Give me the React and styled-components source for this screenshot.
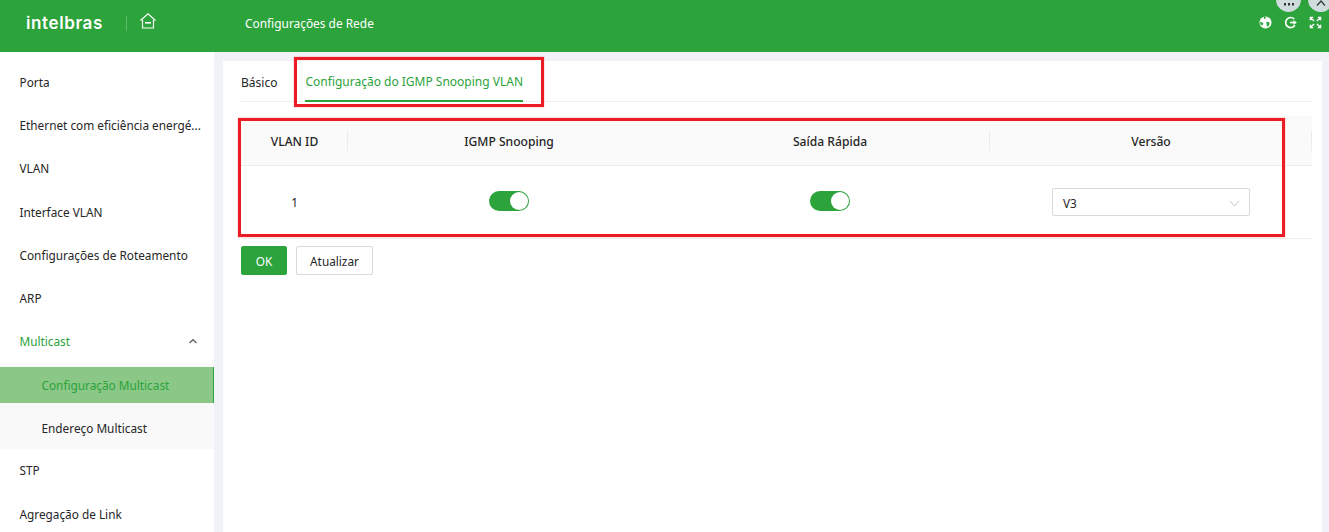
import React from 'react';
import styled, { createGlobalStyle } from 'styled-components';

const Global = createGlobalStyle`
  html, body { margin: 0; padding: 0; height: 100%; background: #f0f2f7; overflow: hidden; }
  #root { height: 100%; }
  * { box-sizing: border-box; }
`;
const Page = styled.div`
  position: relative; width: 1329px; height: 532px; overflow: hidden;
  display: flex; flex-direction: column;
  font-family: "Noto Sans", "Open Sans", sans-serif; font-size: 11.8px; color: #262626;
`;
const Header = styled.header`
  height: 52px; flex: none; background: #2ca33b; color: #fff; display: flex; align-items: center;
`;
const Logo = styled.div`
  margin-left: 26px; width: 76px; font-family: Inter, sans-serif; font-weight: 600; font-size: 17px; letter-spacing: 0.6px; line-height: 18px; margin-top: -6px; white-space: nowrap;
`;
const HeaderDivider = styled.div`
  width: 1px; height: 15px; background: #5dba68; margin: -6px 13px 0 24px;
`;
const HomeBtn = styled.svg`
  width: 16px; height: 16px; margin-top: -10px;
`;
const HeaderTitle = styled.div`
  margin-left: 89px; font-size: 11.9px; margin-top: -7px;
`;
const HeaderIcons = styled.div`
  margin-left: auto; margin-right: 7px; margin-top: -8px; display: flex; gap: 12px; align-items: center;
`;
const HeadIcon = styled.svg`
  width: 13px; height: 13px; display: block;
`;
const FloatBtn = styled.div`
  position: absolute; top: -13px; left: ${p => p.$x}px; width: 25px; height: 25px; border-radius: 50%;
  background: #cfdcdc; display: flex; align-items: flex-end; justify-content: center; padding-bottom: 6px;
`;
const Body = styled.div`
  flex: 1; display: flex; min-height: 0;
`;
const Sidebar = styled.nav`
  width: 214px; flex: none; background: #fff; padding-top: 9px; overflow: hidden;
`;
const MenuItem = styled.div`
  height: 43.2px; padding: 0 16px 1px 19.500px; display: flex; align-items: center; justify-content: space-between;
  white-space: nowrap; color: ${p => (p.$active ? '#2ca33b' : '#262626')};
`;
const SubMenu = styled.div`
  background: #f9f9f9; padding: 4px 0 3px; display: flex; flex-direction: column; gap: 7px;
`;
const SubItem = styled.div`
  height: 36px; padding-left: 41.500px; display: flex; align-items: center;
  ${p => p.$active ? 'background: #8bc887; color: #2ca33b; border-right: 1px solid #2ca33b;' : ''}
`;
const Main = styled.main`
  margin: 9px 7px 0 9px; flex: 1; background: #fff; padding: 0 10px 0 18px;
`;
const Tabs = styled.div`
  height: 41px; border-bottom: 1px solid #eeeeee; display: flex; gap: 28px; align-items: stretch;
`;
const Tab = styled.div`
  display: flex; align-items: center; padding-top: 1px; height: 41px; font-size: 12px;
  ${p => p.$active ? 'color: #2ca33b; border-bottom: 2px solid #2ca33b;' : ''}
`;
const Table = styled.div`
  margin-top: 14px; display: grid; grid-template-columns: 107px 322px 320px 322px;
`;
const HeadCell = styled.div`
  height: 50px; background: #fafafa; border-bottom: 1px solid #eeeeee; display: flex; align-items: center; justify-content: center;
  font-weight: 500; position: relative; font-size: 12.1px; padding-top: 2px;
  &::after { content: ''; position: absolute; right: 0; top: 15px; height: 20px; width: 1px; background: ${p => (p.$plain ? 'transparent' : '#ececec')}; }
`;
const Cell = styled.div`
  height: 73px; border-bottom: 1px solid #eeeeee; display: flex; align-items: center; justify-content: center; padding-bottom: ${p => (p.$text ? '0' : '2px')};
`;
const Switch = styled.div`
  width: 40px; height: 20px; border-radius: 10px; background: #2ca33b; display: flex; justify-content: flex-end; align-items: center; padding-right: 1px;
  &::after { content: ''; width: 18px; height: 18px; border-radius: 50%; background: #fff; }
`;
const Select = styled.div`
  width: 198px; height: 28px; border: 1px solid #d9d9d9; border-radius: 2px; display: flex; align-items: center; justify-content: space-between;
  padding: 2px 9px 0 10px; background: #fff; margin-top: 2px;
`;
const Actions = styled.div`
  margin-top: 7px; display: flex; gap: 9px;
`;
const Button = styled.button`
  height: 29px; padding: 0; width: ${p => p.$w}px; font: inherit; border-radius: 2px; cursor: pointer;
  border: 1px solid ${p => (p.$primary ? '#2ca33b' : '#d9d9d9')};
  background: ${p => (p.$primary ? '#2ca33b' : '#fff')}; color: ${p => (p.$primary ? '#fff' : '#262626')};
`;
const RedBox = styled.div`
  position: absolute; border: 3px solid #ec1c24; pointer-events: none; box-shadow: 0 0 1px rgba(236, 28, 36, 0.7);
  left: ${p => p.$x}px; top: ${p => p.$y}px; width: ${p => p.$w}px; height: ${p => p.$h}px;
`;

export default function App() {
  return (
    <Page>
      <Global />
      <Header>
        <Logo>intelbras</Logo>
        <HeaderDivider />
        <HomeBtn viewBox="0 0 16 16" fill="none" stroke="#fff" strokeWidth="1.2">
          <path d="M.5 7.500 8 .8l7.500 6.700" />
          <path d="M2.500 7v8h11V7" />
          <path d="M5 9.800h6" strokeWidth="1.600" />
        </HomeBtn>
        <HeaderTitle>Configurações de Rede</HeaderTitle>
        <HeaderIcons>
          <HeadIcon viewBox="0 0 14 14">
            <circle cx="7" cy="7" r="6.500" fill="#fff" />
            <path d="M7.800 6.200 11 6.800l.4 1.700-1.900 3.300-1-1.300zM1 6.300l2.200.3L4.600 8l-.8 2.300L1.800 9.500z" fill="#2ca33b" />
            <path d="M5.600 .8 5 2.400l1.800 1 .6-2.700z" fill="#2ca33b" />
          </HeadIcon>
          <HeadIcon viewBox="0 0 14 14" fill="none" stroke="#fff" strokeWidth="1.800">
            <path d="M11 3.200A5.400 5.400 0 1 0 11.700 10" />
            <path d="M6.500 7H12" />
            <path d="M10.500 4.800v4.400L13.500 7z" fill="#fff" strokeWidth="0.5" />
          </HeadIcon>
          <HeadIcon viewBox="0 0 14 14" fill="none" stroke="#fff" strokeWidth="1.500">
            <path d="M1.500 4.500v-3h3M1.500 1.500 5.500 5.500M12.500 4.500v-3h-3M12.500 1.500 8.500 5.500M1.500 9.500v3h3M1.500 12.500l4-4M12.500 9.500v3h-3M12.500 12.500l-4-4" />
          </HeadIcon>
        </HeaderIcons>
      </Header>
      <FloatBtn $x={1276}>
        <svg width="10" height="3" viewBox="0 0 10 3" fill="#333"><rect x="0" width="2" height="2.500" /><rect x="4" width="2" height="2.500" /><rect x="8" width="2" height="2.500" /></svg>
      </FloatBtn>
      <FloatBtn $x={1308}>
        <svg width="10" height="6" viewBox="0 0 10 6" fill="none" stroke="#333" strokeWidth="1.200"><path d="M1 5.500 5 1l4 4.500" /></svg>
      </FloatBtn>
      <Body>
        <Sidebar>
          <MenuItem>Porta</MenuItem>
          <MenuItem>Ethernet com eficiência energé...</MenuItem>
          <MenuItem>VLAN</MenuItem>
          <MenuItem>Interface VLAN</MenuItem>
          <MenuItem>Configurações de Roteamento</MenuItem>
          <MenuItem>ARP</MenuItem>
          <MenuItem $active>
            Multicast
            <svg width="10" height="6" viewBox="0 0 10 6" fill="none" stroke="#666" strokeWidth="1.400"><path d="M1.500 5 5 1.800 8.500 5" /></svg>
          </MenuItem>
          <SubMenu>
            <SubItem $active>Configuração Multicast</SubItem>
            <SubItem>Endereço Multicast</SubItem>
          </SubMenu>
          <MenuItem>STP</MenuItem>
          <MenuItem>Agregação de Link</MenuItem>
        </Sidebar>
        <Main>
          <Tabs>
            <Tab>Básico</Tab>
            <Tab $active>Configuração do IGMP Snooping VLAN</Tab>
          </Tabs>
          <Table>
            <HeadCell>VLAN ID</HeadCell>
            <HeadCell $plain>IGMP Snooping</HeadCell>
            <HeadCell>Saída Rápida</HeadCell>
            <HeadCell>Versão</HeadCell>
            <Cell $text>1</Cell>
            <Cell><Switch /></Cell>
            <Cell><Switch /></Cell>
            <Cell>
              <Select>
                V3
                <svg width="11" height="7" viewBox="0 0 11 7" fill="none" stroke="#c4c4c4" strokeWidth="1"><path d="M1 1l4.500 5L10 1" /></svg>
              </Select>
            </Cell>
          </Table>
          <Actions>
            <Button $primary $w={46}>OK</Button>
            <Button $w={77}>Atualizar</Button>
          </Actions>
        </Main>
      </Body>
      <RedBox $x={294} $y={57} $w={250} $h={50} />
      <RedBox $x={238} $y={118} $w={1047} $h={119} />
    </Page>
  );
}
